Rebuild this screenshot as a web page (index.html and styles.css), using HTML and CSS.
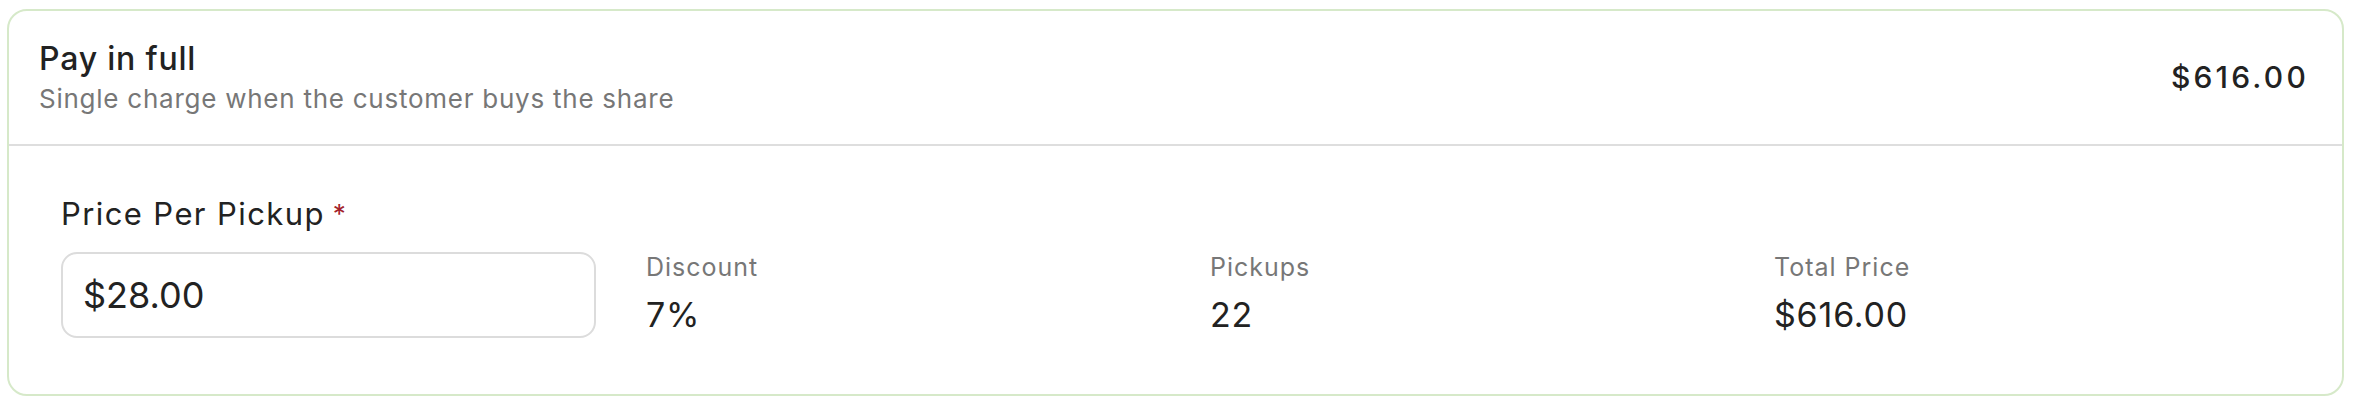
FILE: index.html
```html
<!DOCTYPE html>
<html lang="en">

<head>
    <meta charset="UTF-8">
    <meta name="viewport" content="width=device-width, initial-scale=1.0">
    <title>Payment option</title>
    <link rel="stylesheet" href="styles.css">
</head>

<body>
    <section class="plan-card">
        <header class="plan-header">
            <div class="plan-info">
                <h2 class="plan-title">Pay in full</h2>
                <p class="plan-subtitle">Single charge when the customer buys the share</p>
            </div>
            <div class="plan-amount">$616.00</div>
        </header>

        <div class="plan-body">
            <label class="field-label" for="pricePerPickup">Price Per Pickup<span class="required">*</span></label>
            <div class="field-row">
                <input class="price-input" id="pricePerPickup" type="text" value="$28.00">
                <div class="stats">
                    <div class="stat">
                        <div class="stat-label">Discount</div>
                        <div class="stat-value">7%</div>
                    </div>
                    <div class="stat">
                        <div class="stat-label">Pickups</div>
                        <div class="stat-value">22</div>
                    </div>
                    <div class="stat">
                        <div class="stat-label">Total Price</div>
                        <div class="stat-value">$616.00</div>
                    </div>
                </div>
            </div>
        </div>
    </section>
</body>

</html>
```

FILE: styles.css
```css
* {
    margin: 0;
    padding: 0;
    box-sizing: border-box;
    font-family: Inter, 'Noto Sans', sans-serif;
}

body {
    background-color: #fff;
    color: #222;
    padding: 9px 16px 10px 7px;
}

.plan-card {
    border: 2px solid #d6e9c9;
    border-radius: 20px;
    background: #fff;
}

.plan-header {
    display: flex;
    justify-content: space-between;
    align-items: center;
    padding: 28px 33px 29px 30px;
    border-bottom: 2px solid #dedede;
}

.plan-title {
    font-size: 32px;
    font-weight: 500;
    line-height: 40px;
    letter-spacing: 0.8px;
    color: #222;
}

.plan-subtitle {
    margin-top: 4px;
    font-size: 26px;
    line-height: 32px;
    letter-spacing: 0.75px;
    color: #777;
}

.plan-amount {
    font-size: 30px;
    font-weight: 500;
    letter-spacing: 3.2px;
    color: #222;
}

.plan-body {
    padding: 50px 4px 56px 52px;
}

.field-label {
    display: block;
    font-size: 31px;
    line-height: 36px;
    letter-spacing: 1.4px;
    color: #222;
}

.required {
    margin-left: 8px;
    font-size: 26px;
    vertical-align: top;
    color: #a3222a;
}

.field-row {
    display: grid;
    grid-template-columns: 535px 1fr;
    column-gap: 50px;
    align-items: start;
    margin-top: 20px;
}

.price-input {
    height: 86px;
    padding: 0 20px;
    border: 2px solid #dcdcdc;
    border-radius: 16px;
    font-size: 36px;
    color: #222;
    outline: none;
}

.stats {
    display: grid;
    grid-template-columns: repeat(3, 564px);
}

.stat-label {
    font-size: 25px;
    line-height: 30px;
    letter-spacing: 1px;
    color: #777;
}

.stat-value {
    margin-top: 13px;
    font-size: 34px;
    line-height: 40px;
    letter-spacing: 0.8px;
    color: #222;
}
```
